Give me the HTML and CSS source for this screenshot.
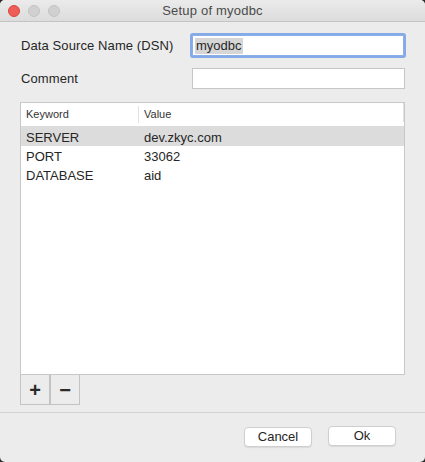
FILE: index.html
```html
<!DOCTYPE html>
<html>
<head>
<meta charset="utf-8">
<link rel="stylesheet" href="styles.css">
</head>
<body>
<div class="window">
  <div class="titlebar">
    <div class="lights">
      <span class="light red"></span>
      <span class="light"></span>
      <span class="light"></span>
    </div>
    <div class="title">Setup of myodbc</div>
  </div>
  <div class="content">
    <div class="row first">
      <label class="label">Data Source Name (DSN)</label>
      <div class="input focus"><span class="sel">myodbc</span></div>
    </div>
    <div class="row">
      <label class="label">Comment</label>
      <div class="input"></div>
    </div>
    <div class="table">
      <div class="thead">
        <div class="c1 th">Keyword</div>
        <div class="c2 th">Value</div>
        <div class="hend"></div>
      </div>
      <div class="tr selected"><div class="c1">SERVER</div><div class="c2">dev.zkyc.com</div></div>
      <div class="tr"><div class="c1">PORT</div><div class="c2">33062</div></div>
      <div class="tr"><div class="c1">DATABASE</div><div class="c2">aid</div></div>
    </div>
    <div class="pm">
      <button class="pmb">+</button><button class="pmb">&minus;</button>
    </div>
  </div>
  <div class="footer">
    <button class="btn cancel">Cancel</button>
    <button class="btn ok">Ok</button>
  </div>
</div>
</body>
</html>
```
FILE: styles.css
```css
html, body {
  margin: 0;
  padding: 0;
  background: #2a2a2a;
}
body {
  width: 425px;
  height: 462px;
  overflow: hidden;
  font-family: "Liberation Sans", Arial, sans-serif;
  font-size: 13px;
  color: #262626;
}
.window {
  width: 425px;
  height: 462px;
  background: #ececec;
  border-radius: 5px;
  overflow: hidden;
  display: flex;
  flex-direction: column;
}
.titlebar {
  height: 21px;
  border-bottom: 1px solid #c4c4c4;
  background: linear-gradient(#ebebeb, #dcdcdc);
  display: flex;
  align-items: center;
  position: relative;
}
.lights {
  display: flex;
  gap: 8px;
  padding-left: 8px;
  align-items: center;
}
.light {
  width: 12px;
  height: 12px;
  border-radius: 50%;
  background: #d0d0d0;
  box-sizing: border-box;
  border: 1px solid #c3c3c3;
}
.light.red {
  background: #ee5d57;
  border-color: #d9473f;
}
.title {
  position: absolute;
  left: 0;
  right: 0;
  top: 3px;
  text-align: center;
  color: #4a4a4a;
  font-size: 13px;
  letter-spacing: 0.2px;
}
.content {
  padding: 0 20px 0 20px;
  display: flex;
  flex-direction: column;
}
.row {
  display: flex;
  align-items: center;
  height: 21px;
  margin-top: 12px;
}
.row.first {
  margin-top: 13px;
}
.label {
  width: 171px;
  padding-left: 1px;
  color: #262626;
  letter-spacing: 0.1px;
}
.input {
  box-sizing: border-box;
  width: 213px;
  height: 21px;
  background: #fff;
  border: 1px solid #c6c6c6;
  display: flex;
  align-items: center;
  padding-left: 2px;
}
.input.focus {
  border: 1px solid #8aaee6;
  box-shadow: 0 0 0 2px #86aae8;
  border-radius: 1px;
  width: 212px;
}
.sel {
  background: #d6d6d6;
  padding: 0 1px;
  line-height: 16px;
}
.table {
  margin-top: 13px;
  height: 273px;
  box-sizing: border-box;
  border: 1px solid #c8c8c8;
  background: #fff;
  display: flex;
  flex-direction: column;
}
.thead {
  display: flex;
  height: 23px;
  border-bottom: 1px solid #dcdcdc;
  align-items: center;
  font-size: 11px;
  color: #333;
}
.th {
  height: 23px;
  line-height: 23px;
}
.thead .c1 {
  border-right: 1px solid #e2e2e2;
  height: 17px;
  line-height: 17px;
}
.hend {
  margin-left: auto;
  width: 1px;
  height: 19px;
  background: #e0e0e0;
  align-self: flex-start;
}
.c1 {
  padding-left: 5px;
  box-sizing: border-box;
  width: 118px;
}
.c2 {
  padding-left: 5px;
}
.tr {
  display: flex;
  height: 19px;
  line-height: 21px;
  color: #262626;
}
.tr.selected {
  background: #dcdcdc;
}
.pm {
  display: flex;
}
.pmb {
  box-sizing: border-box;
  width: 30px;
  height: 30px;
  margin: 0;
  padding: 0;
  border: 1px solid #c3c3c3;
  border-top: none;
  background: #ececec;
  font-family: "Liberation Sans", Arial, sans-serif;
  font-size: 20px;
  font-weight: bold;
  color: #2a2a2a;
  line-height: 28px;
}
.footer {
  margin-top: 7px;
  border-top: 1px solid #d3d3d3;
  flex: 1;
  display: flex;
  justify-content: flex-end;
  align-items: flex-start;
  padding-right: 29px;
  padding-top: 13px;
  gap: 16px;
}
.btn {
  box-sizing: border-box;
  width: 68px;
  height: 20px;
  margin: 0;
  background: #fff;
  border: 1px solid #cfcfcf;
  border-radius: 4px;
  box-shadow: 0 1px 1px rgba(0,0,0,0.08);
  font-family: "Liberation Sans", Arial, sans-serif;
  font-size: 13px;
  color: #262626;
  padding: 0;
  line-height: 18px;
}
.btn.cancel {
  margin-top: 1px;
}
```
